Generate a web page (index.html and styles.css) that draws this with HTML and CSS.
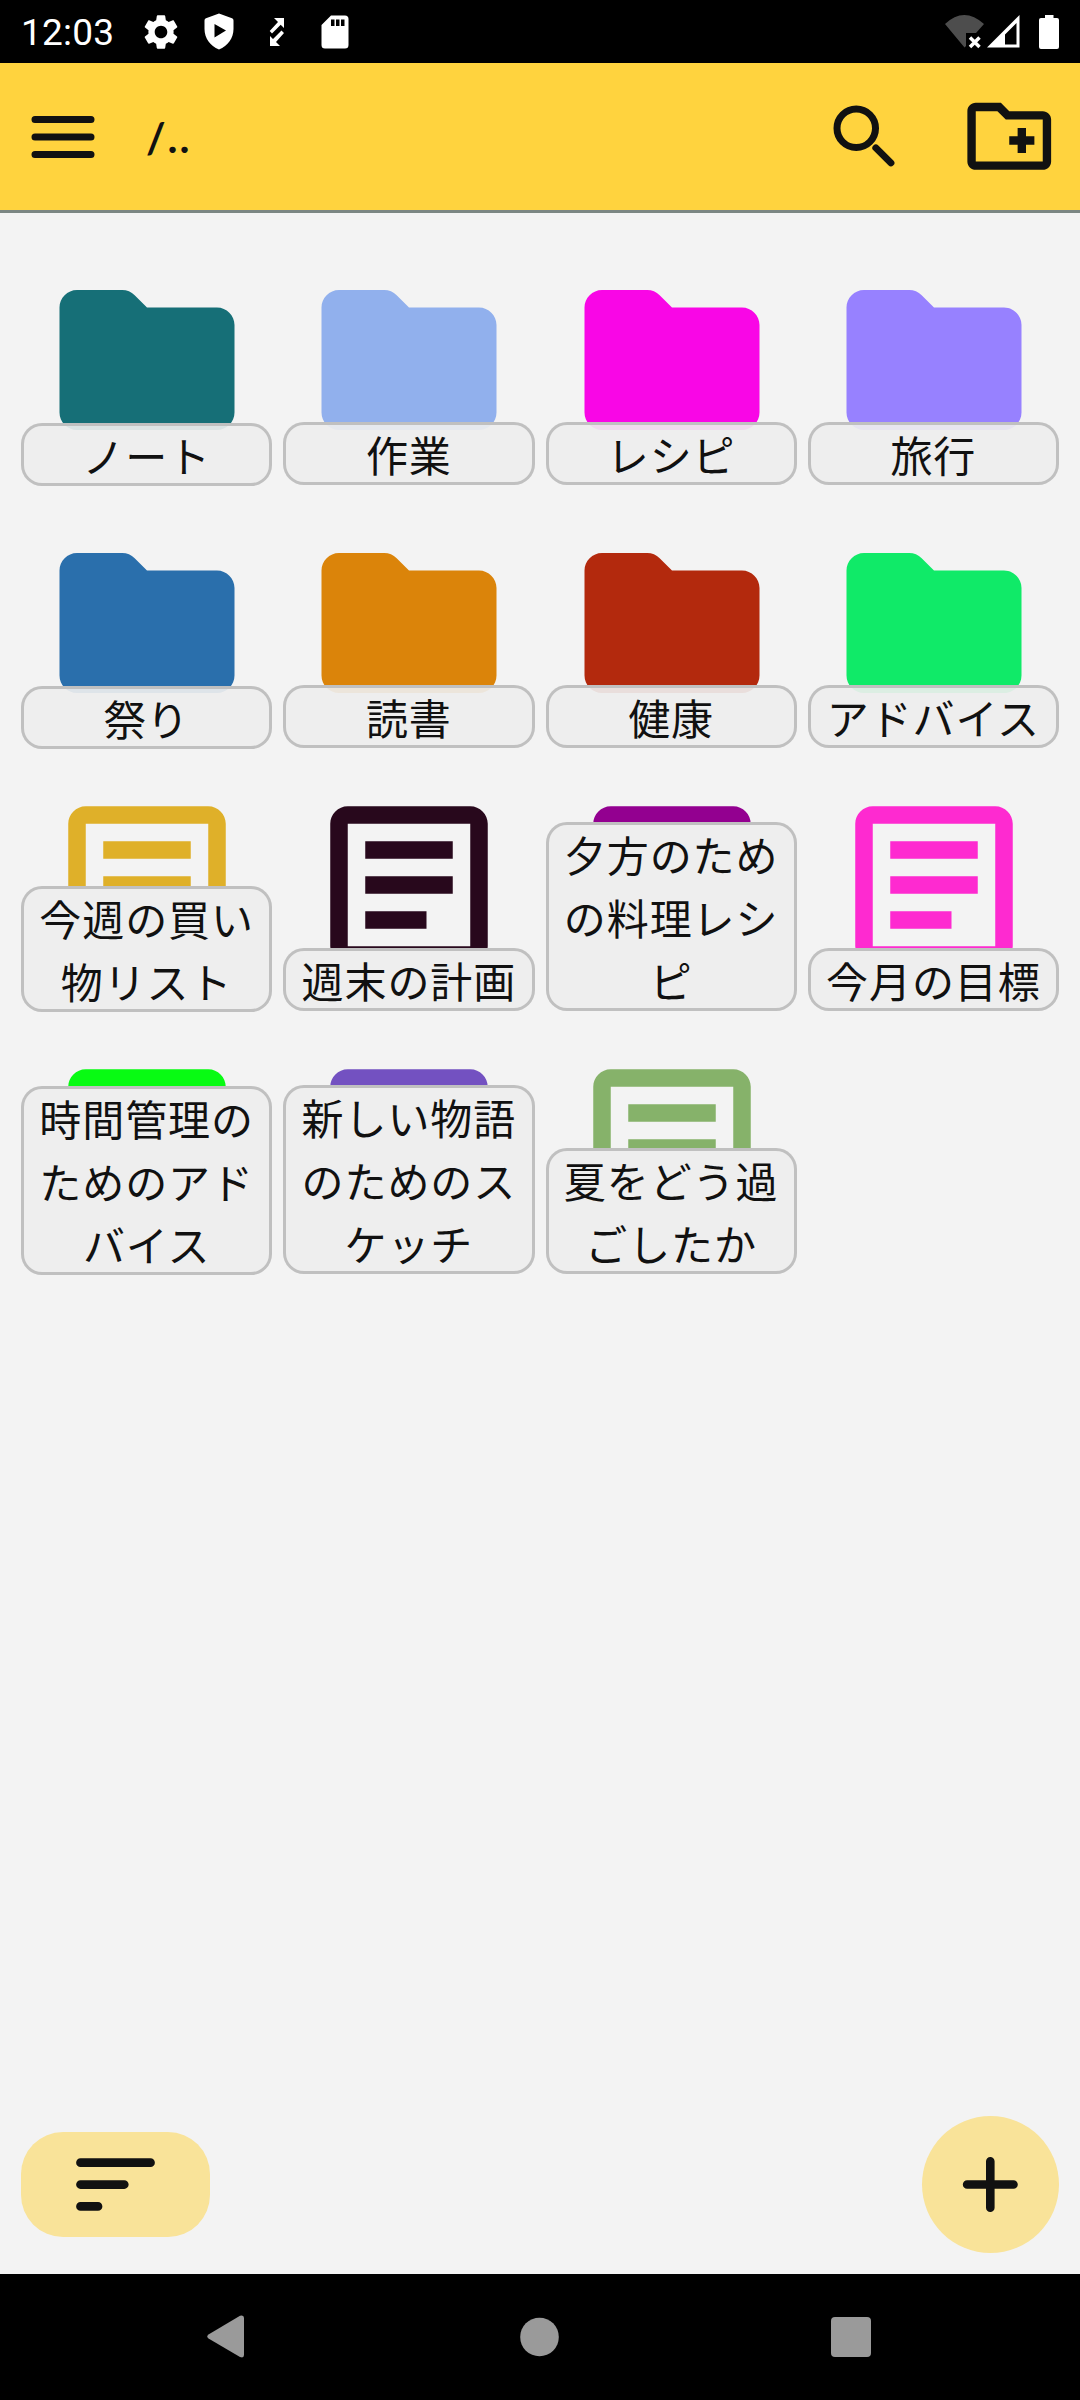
FILE: index.html
```html
<!DOCTYPE html>
<html lang="ja">
<head>
<meta charset="utf-8">
<title>ノート</title>
<link rel="stylesheet" href="styles.css">
</head>
<body>
<svg class="defs" aria-hidden="true">
  <symbol id="folder" viewBox="0 0 24 24"><path d="M10.59 4.59C10.21 4.21 9.7 4 9.17 4H4c-1.1 0-2 .9-2 2v12c0 1.1.9 2 2 2h16c1.1 0 2-.9 2-2V8c0-1.1-.9-2-2-2h-8z"/></symbol>
  <symbol id="note" viewBox="0 0 24 24"><path d="M19 5v14H5V5h14m0-2H5c-1.1 0-2 .9-2 2v14c0 1.1.9 2 2 2h14c1.1 0 2-.9 2-2V5c0-1.1-.9-2-2-2zM14 17H7v-2h7zM17 13H7v-2h10zM17 9H7V7h10z"/></symbol>
</svg>
<div class="screen">
  <div class="status">
    <span class="clock">12:03</span>
    <svg class="s-gear" width="42" height="42" viewBox="0 0 24 24"><path d="M19.14 12.94c.04-.3.06-.61.06-.94 0-.32-.02-.64-.07-.94l2.03-1.58c.18-.14.23-.41.12-.61l-1.92-3.32c-.12-.22-.37-.29-.59-.22l-2.39.96c-.5-.38-1.03-.7-1.62-.94l-.36-2.54c-.04-.24-.24-.41-.48-.41h-3.84c-.24 0-.43.17-.47.41l-.36 2.54c-.59.24-1.13.57-1.62.94l-2.39-.96c-.22-.08-.47 0-.59.22L2.74 8.87c-.12.21-.08.47.12.61l2.03 1.58c-.05.3-.09.63-.09.94s.02.64.07.94l-2.03 1.58c-.18.14-.23.41-.12.61l1.92 3.32c.12.22.37.29.59.22l2.39-.96c.5.38 1.03.7 1.62.94l.36 2.54c.05.24.24.41.48.41h3.84c.24 0 .44-.17.47-.41l.36-2.54c.59-.24 1.13-.56 1.62-.94l2.39.96c.22.08.47 0 .59-.22l1.92-3.32c.12-.22.07-.47-.12-.61zM12 15.6c-1.98 0-3.6-1.62-3.6-3.6s1.62-3.6 3.6-3.6 3.6 1.62 3.6 3.6-1.62 3.6-3.6 3.6z"/></svg>
    <svg class="s-shield" width="30" height="37" viewBox="0 0 30 37"><path fill-rule="evenodd" d="M15 .5 28 5.200Q29.500 5.800 29.500 7.500V16C29.500 25 24 33 15 36.500 6 33 .5 25 .5 16V7.500Q.5 5.800 2 5.200ZM10.500 11V24.500L22 17.500Z"/></svg>
    <svg class="s-sync" width="16" height="30" viewBox="0 0 16 30"><path d="M5 1h10v10l-3.300-3.300L3 16.500.7 14 9 5ZM11 29H1V19l3 3 8.500-8.500L15 16 7 25Z"/></svg>
    <svg class="s-sd" width="28" height="34" viewBox="0 0 28 34"><path fill-rule="evenodd" d="M10 .5H24Q27.500.5 27.500 4V30Q27.500 33.500 24 33.500H4Q.5 33.500.5 30V10ZM10 4.500v6.500h3.500V4.500ZM15 4.500v6.500h3.500V4.500ZM20 4.500v6.500h3.500V4.500Z"/></svg>
    <svg class="s-wifi" width="40" height="34" viewBox="0 0 40 34"><path fill="#4d4d4d" d="M0 9Q19 -9 39 9L31 18H21V31L19.500 32.500Z"/><path d="M25 22.500l9.500 9.500M34.500 22.500l-9.500 9.500" stroke="#fff" stroke-width="3.500" fill="none"/></svg>
    <svg class="s-signal" width="33" height="33" viewBox="0 0 33 33"><path fill-rule="evenodd" d="M0 32.500 32.500 0V32.500ZM18 29.500H29.500V8L18 19.500Z"/></svg>
    <svg class="s-battery" width="20" height="34" viewBox="0 0 20 34"><path d="M6 0h8.500v3H18Q20 3 20 5V32Q20 34 18 34H2Q0 34 0 32V5Q0 3 2 3H6Z"/></svg>
  </div>

  <header class="toolbar">
    <svg class="menu" width="84" height="84" viewBox="0 0 24 24"><path class="line" d="M4 7h16M4 12h16M4 17h16"/></svg>
    <span class="path">/..</span>
    <svg class="search" width="84" height="84" viewBox="0 0 24 24"><circle class="line" cx="9.500" cy="9.500" r="5.500"/><path class="line" d="M15.100 15.100 19.400 19.400"/></svg>
    <svg width="100.500" height="100.500" viewBox="0 0 24 24"><path d="M20 6h-8l-2-2H4c-1.110 0-2 .89-2 2v12c0 1.110.89 2 2 2h16c1.110 0 2-.89 2-2V8c0-1.110-.89-2-2-2zm0 12H4V6h5.170l2 2H20v10zm-8-4h2v2h2v-2h2v-2h-2v-2h-2v2h-2z"/></svg>
  </header>

  <main class="content">
    <div class="grid">
      <div class="item c-teal"><svg class="icon"><use href="#folder"/></svg><span class="label over">ノート</span></div>
      <div class="item c-sky"><svg class="icon"><use href="#folder"/></svg><span class="label over">作業</span></div>
      <div class="item c-magenta"><svg class="icon"><use href="#folder"/></svg><span class="label over">レシピ</span></div>
      <div class="item c-lavender"><svg class="icon"><use href="#folder"/></svg><span class="label over">旅行</span></div>
      <div class="item c-blue"><svg class="icon"><use href="#folder"/></svg><span class="label over">祭り</span></div>
      <div class="item c-orange"><svg class="icon"><use href="#folder"/></svg><span class="label over">読書</span></div>
      <div class="item c-red"><svg class="icon"><use href="#folder"/></svg><span class="label over">健康</span></div>
      <div class="item c-green"><svg class="icon"><use href="#folder"/></svg><span class="label over">アドバイス</span></div>
      <div class="item c-gold"><svg class="icon"><use href="#note"/></svg><span class="label">今週の買い<br>物リスト</span></div>
      <div class="item c-plum"><svg class="icon"><use href="#note"/></svg><span class="label">週末の計画</span></div>
      <div class="item c-purple"><svg class="icon"><use href="#note"/></svg><span class="label">夕方のため<br>の料理レシ<br>ピ</span></div>
      <div class="item c-pink"><svg class="icon"><use href="#note"/></svg><span class="label">今月の目標</span></div>
      <div class="item c-lime"><svg class="icon"><use href="#note"/></svg><span class="label">時間管理の<br>ためのアド<br>バイス</span></div>
      <div class="item c-violet"><svg class="icon"><use href="#note"/></svg><span class="label">新しい物語<br>のためのス<br>ケッチ</span></div>
      <div class="item c-sage"><svg class="icon"><use href="#note"/></svg><span class="label">夏をどう過<br>ごしたか</span></div>
    </div>
    <div class="actions">
      <div class="sort"><svg width="105" height="105" viewBox="0 0 24 24"><path class="line" d="M4 7h16M4 12h10M4 17h4"/></svg></div>
      <div class="add"><svg width="57" height="57" viewBox="0 0 57 57"><path class="plus" d="M28.300 5.300V51.700M5.100 28.500H51.500"/></svg></div>
    </div>
  </main>

  <nav class="nav">
    <svg width="41" height="43" viewBox="0 0 41 43"><path d="M1.500 19.500 33 .8Q37 -.5 37 3V40Q37 43.500 33 42L1.500 23.500Q-1 21.500 1.500 19.500Z"/></svg>
    <svg width="39" height="40" viewBox="0 0 39 40"><circle cx="19.500" cy="20" r="19.300"/></svg>
    <svg width="40" height="40" viewBox="0 0 40 40"><rect width="40" height="40" rx="4"/></svg>
  </nav>
</div>
</body>
</html>
```
FILE: styles.css
```css
* { box-sizing: border-box; }

body {
  margin: 0;
  background: #f3f3f3;
  color: #111;
  font-family: Roboto, "Noto Sans CJK JP", sans-serif;
}

svg { display: block; flex: none; }
.defs { position: absolute; width: 0; height: 0; }

.screen {
  display: flex;
  flex-direction: column;
  width: 1080px;
  height: 2400px;
}

.line {
  fill: none;
  stroke: #111;
  stroke-width: 2;
  stroke-linecap: round;
}

.status {
  display: flex;
  align-items: center;
  height: 63px;
  padding: 0 21px;
  background: #000;
  color: #fff;
  fill: #fff;
}
.clock {
  width: 119px;
  padding-top: 3px;
  font-size: 37px;
  line-height: 60px;
  letter-spacing: .2px;
}
.s-shield { margin-left: 22px; }
.s-sync { margin-left: 35px; }
.s-sd { margin-left: 36px; }
.s-wifi { margin-left: auto; margin-right: 2px; }
.s-battery { margin-left: 19px; }

.toolbar {
  display: flex;
  align-items: center;
  height: 150px;
  padding: 0 21px;
  background: #ffd33e;
  border-bottom: 3px solid #7b8683;
  fill: #111;
}
.path {
  margin-left: 41px;
  font-family: Lato, sans-serif;
  font-weight: 700;
  font-size: 42px;
  letter-spacing: 2px;
}
.search { margin-left: auto; margin-right: 52px; }

.content {
  display: flex;
  flex: 1;
  flex-direction: column;
  justify-content: space-between;
  padding: 20.800px 21px 21.500px;
}

.grid {
  display: grid;
  grid-template-columns: repeat(4, 1fr);
  grid-auto-rows: 251.700px;
  gap: 11px;
}
.item {
  display: grid;
  justify-items: center;
}
.icon, .label { grid-area: 1 / 1; }
.icon {
  width: 210px;
  height: 210px;
  margin: 21.300px 0 0 1px;
  fill: currentColor;
}
.label {
  z-index: 1;
  align-self: end;
  width: 100%;
  border-radius: 21px;
  background: #eee;
  box-shadow: inset 0 0 0 3px #c0c0c0;
  color: #111;
  font-size: 42px;
  line-height: 63px;
  letter-spacing: .9px;
  text-align: center;
  font-family: "Noto Sans CJK JP", sans-serif;
}
.over { background: rgba(238, 238, 238, .92); }
.item:nth-child(4n + 1) .label { margin-bottom: -1px; }

.c-teal { color: #166f77; }
.c-sky { color: #91b0ed; }
.c-magenta { color: #f906e6; }
.c-lavender { color: #9781ff; }
.c-blue { color: #2a6fac; }
.c-orange { color: #db840a; }
.c-red { color: #b3290d; }
.c-green { color: #10ea68; }
.c-gold { color: #dfb029; }
.c-plum { color: #28081c; }
.c-purple { color: #930090; }
.c-pink { color: #fe2ad0; }
.c-lime { color: #08fb13; }
.c-violet { color: #7351c1; }
.c-sage { color: #86b26a; }

.actions {
  display: flex;
  align-items: center;
  justify-content: space-between;
}
.sort, .add {
  display: flex;
  align-items: center;
  justify-content: center;
  background: #f9e399;
}
.sort { width: 189px; height: 105px; border-radius: 42px; }
.add { width: 137px; height: 137px; border-radius: 50%; }
.plus {
  fill: none;
  stroke: #111;
  stroke-width: 8.600;
  stroke-linecap: round;
}

.nav {
  display: flex;
  align-items: center;
  gap: 272px;
  height: 126px;
  padding: 0 207px 1px;
  background: #000;
  fill: #9a9a9a;
}
```
